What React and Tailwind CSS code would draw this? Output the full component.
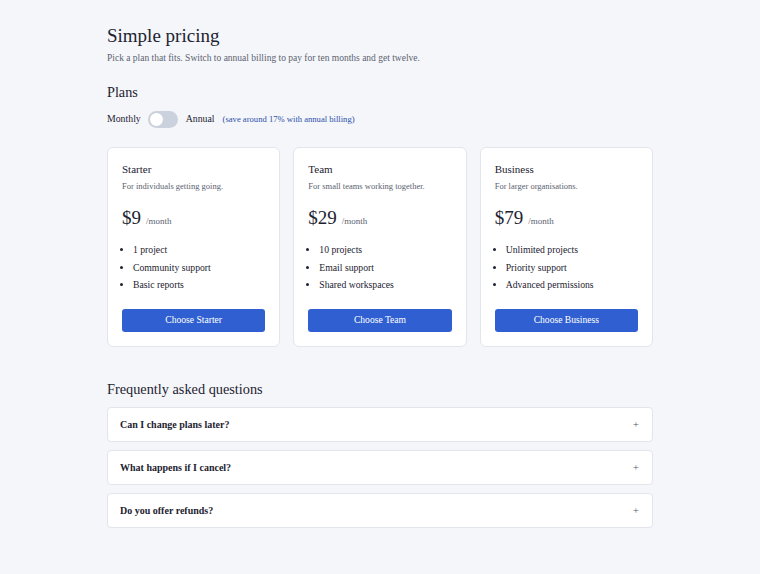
import React, { useState } from 'react';

const plans = [
  { name: 'Starter', blurb: 'For individuals getting going.', price: 9, features: ['1 project', 'Community support', 'Basic reports'] },
  { name: 'Team', blurb: 'For small teams working together.', price: 29, features: ['10 projects', 'Email support', 'Shared workspaces'] },
  { name: 'Business', blurb: 'For larger organisations.', price: 79, features: ['Unlimited projects', 'Priority support', 'Advanced permissions'] },
];

const faqs = ['Can I change plans later?', 'What happens if I cancel?', 'Do you offer refunds?'];

export default function App() {
  const [annual, setAnnual] = useState(false);

  return (
    <div className="min-h-screen bg-[#f5f6fa] text-[#1d2330] font-['Liberation_Serif',serif]">
      <div className="w-[546px] mx-auto pt-[24px] pb-10">
        <h1 className="text-[19px] leading-[23px]">Simple pricing</h1>
        <p className="mt-[4px] text-[9.5px] leading-[14px] text-[#5b6270]">
          Pick a plan that fits. Switch to annual billing to pay for ten months and get twelve.
        </p>

        <h2 className="mt-[18px] text-[14.2px] leading-[18px]">Plans</h2>
        <div className="mt-[10px] flex items-center text-[9.8px]">
          <span>Monthly</span>
          <button
            onClick={() => setAnnual(!annual)}
            className={`relative ml-[7px] w-[30px] h-[17px] rounded-full ${annual ? 'bg-[#2f5fd0]' : 'bg-[#ccd2dd]'}`}
          >
            <span
              className={`absolute top-[1px] w-[15px] h-[15px] rounded-full bg-white border border-[#c6ccd6] ${annual ? 'left-[14px]' : 'left-[1px]'}`}
            />
          </button>
          <span className="ml-[8px]">Annual</span>
          <span className="ml-[8px] text-[8.6px] text-[#2c4fa8]">(save around 17% with annual billing)</span>
        </div>

        <div className="mt-[19px] grid grid-cols-3 gap-[13px]">
          {plans.map((p) => (
            <div key={p.name} className="bg-white border border-[#e2e5ec] rounded-[6px] px-[14px] pt-[14px] pb-[14px]">
              <div className="text-[11px] leading-[15px]">{p.name}</div>
              <div className="mt-[3px] text-[8.5px] leading-[12px] text-[#5b6270]">{p.blurb}</div>
              <div className="mt-[13px] flex items-baseline gap-[5px]">
                <span className="text-[19px] leading-[26px]">${annual ? Math.round(p.price * 10) : p.price}</span>
                <span className="text-[9px] text-[#5b6270]">{annual ? '/year' : '/month'}</span>
              </div>
              <ul className="mt-[10px] pl-[11px] list-disc text-[9.7px] leading-[17.5px] marker:text-[#1d2330]">
                {p.features.map((f) => (
                  <li key={f}>{f}</li>
                ))}
              </ul>
              <button className="mt-[15px] w-full h-[23px] rounded-[3px] bg-[#2f5fd0] text-white text-[9.6px]">
                Choose {p.name}
              </button>
            </div>
          ))}
        </div>

        <h2 className="mt-[32px] text-[14.3px] leading-[20px]">Frequently asked questions</h2>
        <div className="mt-[8px] flex flex-col gap-[8px]">
          {faqs.map((q) => (
            <div key={q} className="bg-white border border-[#e2e5ec] rounded-[4px] h-[35px] px-[12px] flex items-center justify-between">
              <span className="text-[10px] font-bold">{q}</span>
              <span className="text-[11px] text-[#555b66] pr-[1px]">+</span>
            </div>
          ))}
        </div>
      </div>
    </div>
  );
}
